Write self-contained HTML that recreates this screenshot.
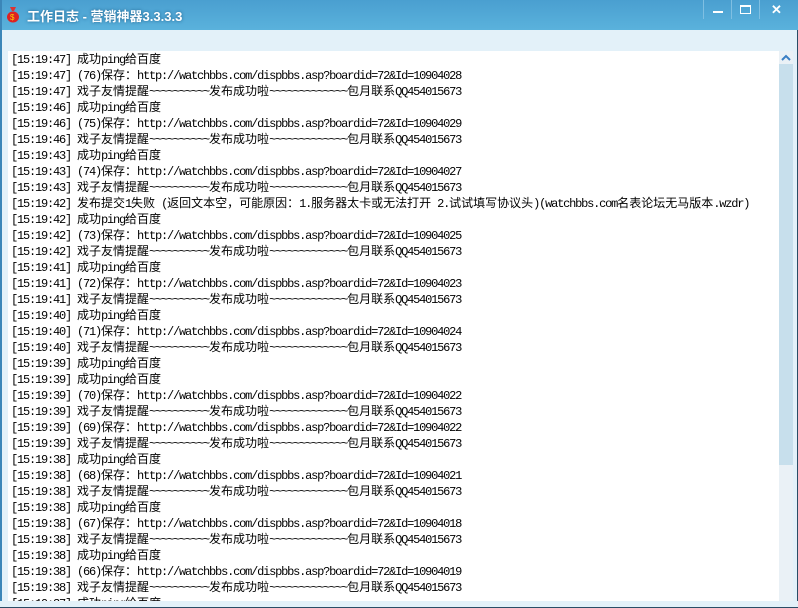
<!DOCTYPE html><html><head><meta charset="utf-8"><style>
body{margin:0;width:798px;height:608px;overflow:hidden;background:#fff;position:relative;font-family:"Liberation Sans","Noto Sans CJK SC",sans-serif}
.tb{position:absolute;left:0;top:0;width:798px;height:30px;background:linear-gradient(#4a9fd0,#5ab2dc);}
.title{position:absolute;left:27px;top:6px;color:#fff;font-weight:bold;font-size:13px;text-shadow:0 0 3px #1d5f8a}
.band{position:absolute;left:0;top:30px;width:798px;height:21px;background:#e3f1f9}
.lb{position:absolute;left:0;top:30px;width:8px;height:578px;background:#e3f1f9}
.lb2{position:absolute;left:0;top:0;width:2px;height:608px;background:#3b86b8}
.rb{position:absolute;left:793px;top:30px;width:5px;height:578px;background:#e3f1f9;border-right:1px solid #2a4d66;box-sizing:border-box}
.bb{position:absolute;left:0;top:601px;width:798px;height:7px;background:#e3f1f9;border-bottom:1px solid #2a4d66;box-sizing:border-box}
.log{position:absolute;left:11px;top:51px;width:766px;height:550px;overflow:hidden;font-family:"Liberation Mono","Noto Sans CJK SC",monospace;font-size:12px;letter-spacing:-1.2px;line-height:16px;color:#000}
.log div{height:16px;white-space:pre}
.c{font-family:"Liberation Sans","Noto Sans CJK SC",sans-serif;font-size:12px;letter-spacing:0}
.sb{position:absolute;left:779px;top:51px;width:14px;height:550px;background:#eaf1f6}
.th{position:absolute;left:779px;top:64px;width:14px;height:401px;background:#c7dfec}
.btn{position:absolute;top:0;height:19px;border-left:1px solid #7fbfe2;}
</style></head><body>
<div class="tb"></div>
<svg style="position:absolute;left:6px;top:6px" width="14" height="17" viewBox="0 0 14 17"><path d="M4 1h6l-2 4h-2z" fill="#d33"/><ellipse cx="7" cy="11" rx="6" ry="5.5" fill="#d22"/><text x="4" y="14" font-size="8" fill="#fc0">$</text></svg>
<div class="title">工作日志 - 营销神器3.3.3.3</div>
<div class="btn" style="left:703px;width:28px"><div style="position:absolute;left:9px;top:11px;width:10px;height:2px;background:#fff"></div></div>
<div class="btn" style="left:731px;width:28px"><div style="position:absolute;left:8px;top:5px;width:9px;height:6px;border:1px solid #fff;border-top-width:2px"></div></div>
<div class="btn" style="left:759px;width:34px;"><div style="position:absolute;left:11px;top:2px;color:#fff;font-size:13px;font-weight:bold">✕</div></div>
<div class="band"></div>
<div class="lb"></div><div class="lb2"></div>
<div class="sb"></div><div class="th"></div>
<svg style="position:absolute;left:779px;top:51px" width="14" height="14"><path d="M3 9l4-4 4 4" stroke="#3b7fc4" stroke-width="2" fill="none"/></svg>
<div class="rb"></div><div class="bb"></div>
<div class="log"><div>[15:19:47] <span class="c">成功</span>ping<span class="c">给百度</span></div><div>[15:19:47] (76)<span class="c">保存：</span>http://watchbbs.com/dispbbs.asp?boardid=72&amp;Id=10904028</div><div>[15:19:47] <span class="c">戏子友情提醒</span>~~~~~~~~~~<span class="c">发布成功啦</span>~~~~~~~~~~~~~<span class="c">包月联系</span>QQ454015673</div><div>[15:19:46] <span class="c">成功</span>ping<span class="c">给百度</span></div><div>[15:19:46] (75)<span class="c">保存：</span>http://watchbbs.com/dispbbs.asp?boardid=72&amp;Id=10904029</div><div>[15:19:46] <span class="c">戏子友情提醒</span>~~~~~~~~~~<span class="c">发布成功啦</span>~~~~~~~~~~~~~<span class="c">包月联系</span>QQ454015673</div><div>[15:19:43] <span class="c">成功</span>ping<span class="c">给百度</span></div><div>[15:19:43] (74)<span class="c">保存：</span>http://watchbbs.com/dispbbs.asp?boardid=72&amp;Id=10904027</div><div>[15:19:43] <span class="c">戏子友情提醒</span>~~~~~~~~~~<span class="c">发布成功啦</span>~~~~~~~~~~~~~<span class="c">包月联系</span>QQ454015673</div><div>[15:19:42] <span class="c">发布提交</span>1<span class="c">失败</span> (<span class="c">返回文本空，可能原因：</span>1.<span class="c">服务器太卡或无法打开</span> 2.<span class="c">试试填写协议头</span>)(watchbbs.com<span class="c">名表论坛无马版本</span>.wzdr)</div><div>[15:19:42] <span class="c">成功</span>ping<span class="c">给百度</span></div><div>[15:19:42] (73)<span class="c">保存：</span>http://watchbbs.com/dispbbs.asp?boardid=72&amp;Id=10904025</div><div>[15:19:42] <span class="c">戏子友情提醒</span>~~~~~~~~~~<span class="c">发布成功啦</span>~~~~~~~~~~~~~<span class="c">包月联系</span>QQ454015673</div><div>[15:19:41] <span class="c">成功</span>ping<span class="c">给百度</span></div><div>[15:19:41] (72)<span class="c">保存：</span>http://watchbbs.com/dispbbs.asp?boardid=72&amp;Id=10904023</div><div>[15:19:41] <span class="c">戏子友情提醒</span>~~~~~~~~~~<span class="c">发布成功啦</span>~~~~~~~~~~~~~<span class="c">包月联系</span>QQ454015673</div><div>[15:19:40] <span class="c">成功</span>ping<span class="c">给百度</span></div><div>[15:19:40] (71)<span class="c">保存：</span>http://watchbbs.com/dispbbs.asp?boardid=72&amp;Id=10904024</div><div>[15:19:40] <span class="c">戏子友情提醒</span>~~~~~~~~~~<span class="c">发布成功啦</span>~~~~~~~~~~~~~<span class="c">包月联系</span>QQ454015673</div><div>[15:19:39] <span class="c">成功</span>ping<span class="c">给百度</span></div><div>[15:19:39] <span class="c">成功</span>ping<span class="c">给百度</span></div><div>[15:19:39] (70)<span class="c">保存：</span>http://watchbbs.com/dispbbs.asp?boardid=72&amp;Id=10904022</div><div>[15:19:39] <span class="c">戏子友情提醒</span>~~~~~~~~~~<span class="c">发布成功啦</span>~~~~~~~~~~~~~<span class="c">包月联系</span>QQ454015673</div><div>[15:19:39] (69)<span class="c">保存：</span>http://watchbbs.com/dispbbs.asp?boardid=72&amp;Id=10904022</div><div>[15:19:39] <span class="c">戏子友情提醒</span>~~~~~~~~~~<span class="c">发布成功啦</span>~~~~~~~~~~~~~<span class="c">包月联系</span>QQ454015673</div><div>[15:19:38] <span class="c">成功</span>ping<span class="c">给百度</span></div><div>[15:19:38] (68)<span class="c">保存：</span>http://watchbbs.com/dispbbs.asp?boardid=72&amp;Id=10904021</div><div>[15:19:38] <span class="c">戏子友情提醒</span>~~~~~~~~~~<span class="c">发布成功啦</span>~~~~~~~~~~~~~<span class="c">包月联系</span>QQ454015673</div><div>[15:19:38] <span class="c">成功</span>ping<span class="c">给百度</span></div><div>[15:19:38] (67)<span class="c">保存：</span>http://watchbbs.com/dispbbs.asp?boardid=72&amp;Id=10904018</div><div>[15:19:38] <span class="c">戏子友情提醒</span>~~~~~~~~~~<span class="c">发布成功啦</span>~~~~~~~~~~~~~<span class="c">包月联系</span>QQ454015673</div><div>[15:19:38] <span class="c">成功</span>ping<span class="c">给百度</span></div><div>[15:19:38] (66)<span class="c">保存：</span>http://watchbbs.com/dispbbs.asp?boardid=72&amp;Id=10904019</div><div>[15:19:38] <span class="c">戏子友情提醒</span>~~~~~~~~~~<span class="c">发布成功啦</span>~~~~~~~~~~~~~<span class="c">包月联系</span>QQ454015673</div><div>[15:19:37] <span class="c">成功</span>ping<span class="c">给百度</span></div></div>
</body></html>
